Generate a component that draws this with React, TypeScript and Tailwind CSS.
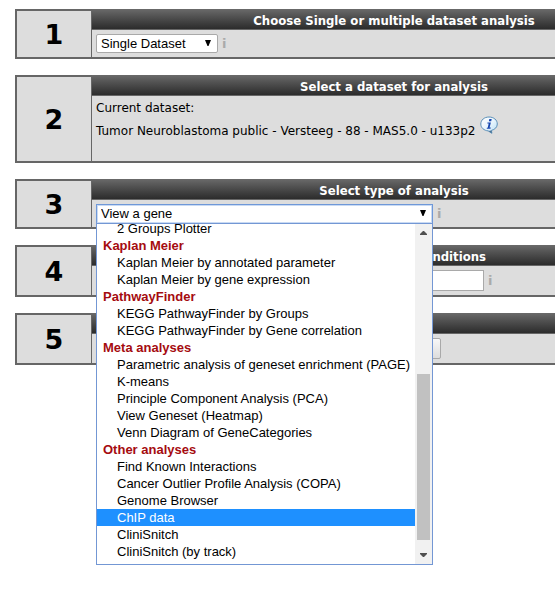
import type { ReactNode } from "react";

type Entry = { label: string; kind: "group" | "option" };

const g = (label: string): Entry => ({ label, kind: "group" });
const o = (label: string): Entry => ({ label, kind: "option" });

const entries: Entry[] = [
  o("2 Groups Plotter"),
  g("Kaplan Meier"),
  o("Kaplan Meier by annotated parameter"),
  o("Kaplan Meier by gene expression"),
  g("PathwayFinder"),
  o("KEGG PathwayFinder by Groups"),
  o("KEGG PathwayFinder by Gene correlation"),
  g("Meta analyses"),
  o("Parametric analysis of geneset enrichment (PAGE)"),
  o("K-means"),
  o("Principle Component Analysis (PCA)"),
  o("View Geneset (Heatmap)"),
  o("Venn Diagram of GeneCategories"),
  g("Other analyses"),
  o("Find Known Interactions"),
  o("Cancer Outlier Profile Analysis (COPA)"),
  o("Genome Browser"),
  o("ChIP data"),
  o("CliniSnitch"),
  o("CliniSnitch (by track)"),
];

const highlighted = "ChIP data";

function Step({ number, title, children }: { number: number; title?: string; children: ReactNode }) {
  return (
    <section className="flex border-2 border-t-0 border-[#666] bg-[#ddd]">
      <div className="flex w-[75px] shrink-0 items-center justify-center border-t-2 border-r border-[#666] pt-0.5 text-[27px] leading-8 font-bold">
        {number}
      </div>
      <div className="flex-1">
        <h2 className="h-[21px] border-b border-[#666] bg-linear-to-b from-[#6a6a6a] to-[#2c2c2c] pt-1 text-center font-['DejaVu_Sans_Condensed','DejaVu_Sans',sans-serif] text-[13px] leading-4 font-bold text-white">
          {title}
        </h2>
        {children}
      </div>
    </section>
  );
}

function Hint() {
  return <span className="text-[13px] leading-4 font-bold text-[#aaa]">i</span>;
}

function Caret({ className }: { className: string }) {
  return (
    <svg viewBox="0 0 6 6" className={className} aria-hidden="true">
      <path d="M0 0h6L3.500 6h-1z" fill="#000" />
    </svg>
  );
}

function InfoBubble() {
  return (
    <svg viewBox="0 0 18 18" className="size-[18px]" aria-hidden="true">
      <defs>
        <linearGradient id="bubble" x1="0" y1="0" x2="1" y2="1">
          <stop offset="0" stopColor="#ffffff" />
          <stop offset="0.5" stopColor="#e8f5fd" />
          <stop offset="1" stopColor="#b4dcf5" />
        </linearGradient>
      </defs>
      <path
        d="M9 1C4.300 1 .8 4 .8 8c0 3.800 3.200 6.500 7.400 6.900l3.700 2.400-.5-2.900C14.900 13.500 17.300 11.200 17.300 8c0-4-3.600-7-8.300-7z"
        fill="url(#bubble)"
        stroke="#5a8fb8"
        strokeWidth="1"
      />
      <path d="M11.900 17.300l-3.600-2.400 3-.5z" fill="#4b7394" />
      <path d="M9.300 3h2.400l-.5 2.200H8.900zM7.500 6.500h3.400L9.600 11.500h1.200l-.3 1.200H6.700l.2-1h.8l1-4.100H7.300z" fill="#1746b0" />
    </svg>
  );
}

export default function App() {
  return (
    <main className="min-h-screen overflow-hidden bg-white pt-[9px] pb-6 pl-[15px] font-['DejaVu_Sans',sans-serif] text-xs text-black">
      <div className="flex min-w-[683px] flex-col gap-4">
        <Step number={1} title="Choose Single or multiple dataset analysis">
          <div className="flex h-[27px] items-center gap-1 pl-1">
            <div className="relative flex">
              <select
                aria-label="Dataset mode"
                className="h-[19px] w-[122px] appearance-none rounded-xs border border-[#a9a9a9] bg-white pl-1 font-['Liberation_Sans',Arial,sans-serif] text-[13px] leading-4"
              >
                <option>Single Dataset</option>
              </select>
              <Caret className="pointer-events-none absolute top-[6px] right-[7px] size-[6px]" />
            </div>
            <Hint />
          </div>
        </Step>

        <Step number={2} title="Select a dataset for analysis">
          <div className="h-[65px] pt-1 pl-1">
            <p className="leading-4">Current dataset:</p>
            <p className="flex items-start gap-1 leading-[18px]">
              <span className="pt-1.5">Tumor Neuroblastoma public - Versteeg - 88 - MAS5.0 - u133p2</span>
              <InfoBubble />
            </p>
          </div>
        </Step>

        <Step number={3} title="Select type of analysis">
          <div className="flex h-[27px] items-center gap-1 pl-1">
            <div className="relative flex">
              <select
                aria-label="Type of analysis"
                className="h-5 w-[337px] appearance-none border border-[#6f98d8] bg-white pl-1 font-['Liberation_Sans',Arial,sans-serif] text-[13px] leading-4 outline-1 -outline-offset-2 outline-[#c9daf3]"
              >
                <option>View a gene</option>
              </select>
              <Caret className="pointer-events-none absolute top-[6px] right-[7px] size-[6px]" />
              <div className="absolute top-[19px] left-0 z-10 flex h-[342px] w-[337px] border border-[#7397d4] bg-white font-['Liberation_Sans',Arial,sans-serif] text-[13px] leading-[17px]">
                <ul role="listbox" aria-label="Analyses" className="flex flex-1 flex-col justify-end overflow-hidden pb-1">
                  {entries.map((e) =>
                    e.kind === "group" ? (
                      <li key={e.label} role="presentation" className="h-[17px] shrink-0 pl-[6px] font-bold whitespace-nowrap text-[#a50b0f]">
                        {e.label}
                      </li>
                    ) : (
                      <li
                        key={e.label}
                        role="option"
                        aria-selected={e.label === highlighted}
                        className={
                          e.label === highlighted
                            ? "h-[17px] shrink-0 bg-[#1e90ff] pl-5 whitespace-nowrap text-white"
                            : "h-[17px] shrink-0 pl-5 whitespace-nowrap"
                        }
                      >
                        {e.label}
                      </li>
                    ),
                  )}
                </ul>
                <div className="flex w-[17px] shrink-0 flex-col items-center bg-[#f1f1f1] py-[7px]">
                  <svg viewBox="0 0 7 4" className="h-1 w-[7px]" aria-hidden="true">
                    <path d="M3 0h1l3 3v1H0V3z" fill="#505050" />
                  </svg>
                  <div className="mt-auto mb-[13px] h-[166px] w-[13px] bg-[#c1c1c1]" />
                  <svg viewBox="0 0 7 4" className="h-1 w-[7px]" aria-hidden="true">
                    <path d="M0 0h7v1L4 4H3L0 1z" fill="#505050" />
                  </svg>
                </div>
              </div>
            </div>
            <Hint />
          </div>
        </Step>

        <Step number={4} title="Select additional conditions">
          <div className="flex h-[29px] items-center gap-1 pl-1">
            <input aria-label="Conditions" className="h-[21px] w-[388px] border border-[#a9a9a9] bg-white px-1" />
            <Hint />
          </div>
        </Step>

        <Step number={5}>
          <div className="flex h-[29px] items-center pl-1">
            <button
              type="button"
              aria-label="Next"
              className="h-[21px] w-[345px] rounded-xs border border-[#a9a9a9] bg-linear-to-b from-[#f8f8f8] to-[#ddd]"
            />
          </div>
        </Step>
      </div>
    </main>
  );
}
